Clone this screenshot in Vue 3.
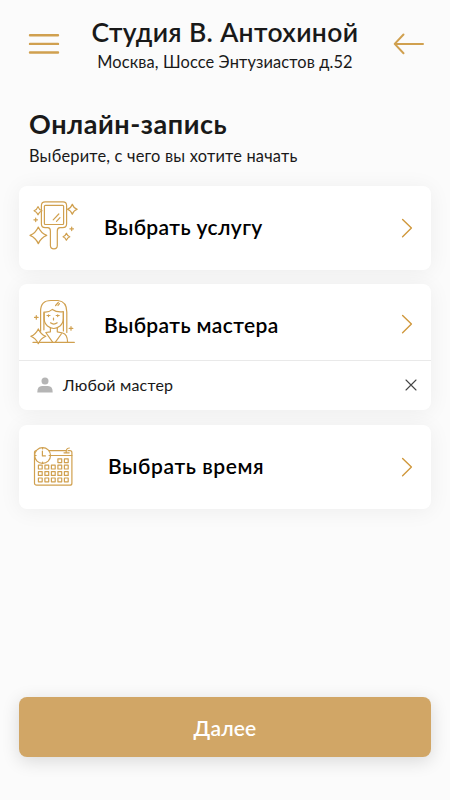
<template>
  <div class="page">
    <header class="header">
      <button class="icon-btn" aria-label="Меню">
        <svg width="32" height="24" viewBox="0 0 32 24">
          <path d="M2 3.2H30M2 11.9H30M2 20.5H30" />
        </svg>
      </button>
      <div class="studio">
        <h1>Студия В. Антохиной</h1>
        <p>Москва, Шоссе Энтузиастов д.52</p>
      </div>
      <button class="icon-btn" aria-label="Назад">
        <svg class="arrow" width="32" height="24" viewBox="0 0 32 24">
          <path d="M30 11.9H2M10.5 2.5L1.7 11.9L10.5 21.2" />
        </svg>
      </button>
    </header>

    <section class="intro">
      <h2>Онлайн-запись</h2>
      <p>Выберите, с чего вы хотите начать</p>
    </section>

    <main class="cards">
      <div v-for="step in steps" :key="step.id" class="card" :class="step.id">
        <div class="row">
          <svg v-if="step.id === 'service'" class="pic" width="52" height="54" viewBox="0 0 52 54">
            <path d="M16.2 3.8H34Q37.6 3.8 37.6 7.6V25.8Q37.6 29.7 33.6 29.7H31Q28.3 29.8 28.3 33V47.5Q28.3 50.8 24.9 50.8T21.4 47.5V33Q21.4 29.8 18.7 29.7H16.2Q12.4 29.7 12.4 25.8V7.6Q12.4 3.8 16.2 3.8Z" />
            <rect x="15.4" y="7.3" width="19.2" height="19.2" rx="1" />
            <path d="M24.2 21.8L29.8 16M27.5 23.3L31 19.7" />
            <path class="fill" d="M9 8.6Q10 11.7 13 12.7Q10 13.7 9 16.8Q8 13.7 5 12.7Q8 11.7 9 8.6Z" />
            <path class="fill" d="M43.3 6.2Q44.6 10 48.2 11.3Q44.6 12.6 43.3 16.3Q42 12.6 38.4 11.3Q42 10 43.3 6.2Z" />
            <path class="fill" d="M9.3 29Q11.8 35 17.7 37.4Q11.8 39.8 9.3 45.7Q6.8 39.8 1 37.4Q6.8 35 9.3 29Z" />
            <path d="M37.4 35.2Q38.3 37.8 40.8 38.7Q38.3 39.6 37.4 42.2Q36.5 39.6 34 38.7Q36.5 37.8 37.4 35.2Z" />
            <path d="M6.7 20V23.6M4.9 21.8H8.5M42.7 29V32.6M40.9 30.8H44.5" />
          </svg>
          <svg v-else-if="step.id === 'master'" class="pic" width="52" height="54" viewBox="0 0 52 54">
            <path d="M11.6 33.2V13.2Q11.6 2.5 22 2.5H29Q37.8 3.5 37.8 14V34.4" />
            <path d="M14.9 31.8V14Q20 14.5 23.4 11.4Q28 14.8 34.4 13.7V33" />
            <path d="M15.2 15V20.5Q15.2 25 18.5 28Q24.8 33 31 28Q34.3 25 34.3 20.5V15" />
            <path d="M21.4 29.7V33.8L16.8 34.5L23.6 44.2M28.3 29.7V33.8L33.6 35Q38.4 36.2 38.6 44.2M33 35L26.4 44.2" />
            <path d="M4 44.4H45.3" />
            <path d="M18 17.5H21M27.2 17.5H30.2M19.5 16.8V18.6M28.7 16.8V18.6M24.5 20V22" />
            <path d="M21.5 24.8Q24.8 27.3 28.2 24.8M26.6 7.5L29.3 4.5M29 7.5L30.5 5.6" />
            <path class="fill" d="M9.3 30.9Q11.7 36.2 16.8 38.3Q11.7 40.5 9.3 45.7Q6.9 40.5 1.8 38.3Q6.9 36.2 9.3 30.9Z" />
            <path d="M7.3 17.6V21.2M5.5 19.4H9.1M42 28.6V32.2M40.2 30.4H43.8" />
          </svg>
          <svg v-else class="pic" width="52" height="54" viewBox="0 0 52 54">
            <rect x="5.5" y="12.6" width="37.4" height="34.6" rx="2" />
            <path d="M21 17.5H42.9" />
            <path class="fill" d="M35 14.8H40.2M37.2 14.5Q36.8 10.2 40.3 10" />
            <circle class="fill" cx="13.6" cy="17.5" r="7.9" />
            <path d="M13.4 13V17.9H16.4M13.6 9.6V11M13.6 24V25.4M5.7 17.5H7.1M20.1 17.5H21.5" />
            <rect
              v-for="(d, i) in days"
              :key="i"
              :x="d.x"
              :y="d.y"
              width="3.8"
              height="3.8"
            />
          </svg>
          <span class="label">{{ step.label }}</span>
          <svg class="chevron" width="12" height="20" viewBox="0 0 12 20">
            <path d="M1.6 1.5L10.4 10.1L1.6 18.7" />
          </svg>
        </div>
        <div v-if="step.selected" class="selected">
          <svg class="person" width="16" height="16" viewBox="0 0 16 16">
            <circle cx="8" cy="4" r="3.5" />
            <path d="M0.3 15.4Q0.3 9 5 9H11Q15.7 9 15.7 15.4Z" />
          </svg>
          <span>{{ step.selected }}</span>
          <svg class="close" width="12" height="12" viewBox="0 0 12 12" @click="step.selected = null">
            <path d="M1 1L11 11M11 1L1 11" />
          </svg>
        </div>
      </div>
    </main>

    <button class="next">Далее</button>
  </div>
</template>

<script setup>
import { reactive } from 'vue'

const steps = reactive([
  { id: 'service', label: 'Выбрать услугу', selected: null },
  { id: 'master', label: 'Выбрать мастера', selected: 'Любой мастер' },
  { id: 'time', label: 'Выбрать время', selected: null }
])

// calendar squares, the first row has only the last two
const days = []
for (let r = 0; r < 4; r++) {
  for (let c = r === 0 ? 3 : 0; c < 5; c++) {
    days.push({ x: 9.4 + c * 6.5, y: 20.8 + r * 6.4 })
  }
}
</script>

<style>
body {
  background: #fbfbfb;
}
</style>

<style scoped>
.page {
  box-sizing: border-box;
  display: flex;
  flex-direction: column;
  width: 450px;
  height: 800px;
  padding: 0 19px 43px;
  background: #fbfbfb;
  color: #191919;
  font-family: Lato, 'Open Sans', sans-serif;
}
h1,
h2,
p {
  margin: 0;
  white-space: nowrap;
}
button {
  padding: 0;
  border: none;
  background: none;
  font-family: inherit;
  cursor: pointer;
}
svg {
  display: block;
  flex: none;
  fill: none;
  stroke: #d0a04f;
  stroke-linecap: round;
  stroke-linejoin: round;
}
.header {
  display: flex;
  justify-content: space-between;
  height: 88px;
  padding: 0 6px 0 9px;
}
.icon-btn {
  height: 24px;
  margin-top: 32px;
}
.icon-btn svg {
  stroke-width: 2.4;
}
.icon-btn .arrow {
  stroke-width: 2;
}
.studio {
  padding: 16px 3px 0 0;
  text-align: center;
}
h1 {
  font-size: 26.5px;
  line-height: 32px;
  font-weight: 600;
  letter-spacing: 0.36px;
}
.studio p {
  margin-top: 3px;
  font-size: 16.4px;
  line-height: 22px;
  letter-spacing: 0.12px;
}
.intro {
  height: 98px;
  padding: 20px 10px 0;
  box-sizing: border-box;
}
h2 {
  font-size: 27px;
  line-height: 32px;
  font-weight: 700;
  letter-spacing: 0.55px;
}
.intro p {
  margin-top: 5px;
  font-size: 16.4px;
  line-height: 22px;
  letter-spacing: 0.2px;
}
.cards {
  display: flex;
  flex-direction: column;
}
.card {
  border-radius: 8px;
  background: #fff;
  box-shadow: 0 2px 22px rgba(0, 0, 0, 0.06);
}
.row {
  display: flex;
  align-items: center;
  height: 84px;
  padding: 0 18px 0 10px;
}
.pic {
  align-self: flex-start;
  margin-top: 12px;
  stroke: #d0a04f;
  stroke-width: 1.2;
}
.pic .fill {
  fill: #fff;
}
.label {
  flex: 1;
  margin: -2px 0 0 23px;
  font-size: 21px;
  line-height: 28px;
  font-weight: 600;
  letter-spacing: 0.38px;
  color: #000;
}
.chevron {
  stroke: #d0983c;
  stroke-width: 1.4;
}
.master {
  margin: 14px 0 15px;
}
.master .row {
  height: 76px;
}
.master .pic {
  margin-top: 14px;
}
.master .label {
  margin-top: 6px;
}
.master .chevron {
  margin-top: 4px;
}
.time .pic {
  margin-top: 13px;
}
.time .label {
  margin-left: 27px;
  letter-spacing: 0.6px;
}
.selected {
  display: flex;
  align-items: center;
  height: 49px;
  padding: 0 14px 0 18px;
  border-top: 1px solid #e9e9e9;
  font-size: 16px;
}
.selected svg {
  margin-top: -2px;
}
.selected span {
  flex: 1;
  margin: -3px 0 0 10px;
  letter-spacing: 0.2px;
}
.person {
  fill: #b5b5b5;
  stroke: none;
}
.close {
  stroke: #444;
  stroke-width: 1.1;
  cursor: pointer;
}
.next {
  height: 60px;
  margin-top: auto;
  border-radius: 8px;
  background: #d1a666;
  box-shadow: 0 4px 18px rgba(0, 0, 0, 0.14);
  color: #fff;
  font-size: 21px;
  font-weight: 600;
  letter-spacing: 0.2px;
}
</style>
